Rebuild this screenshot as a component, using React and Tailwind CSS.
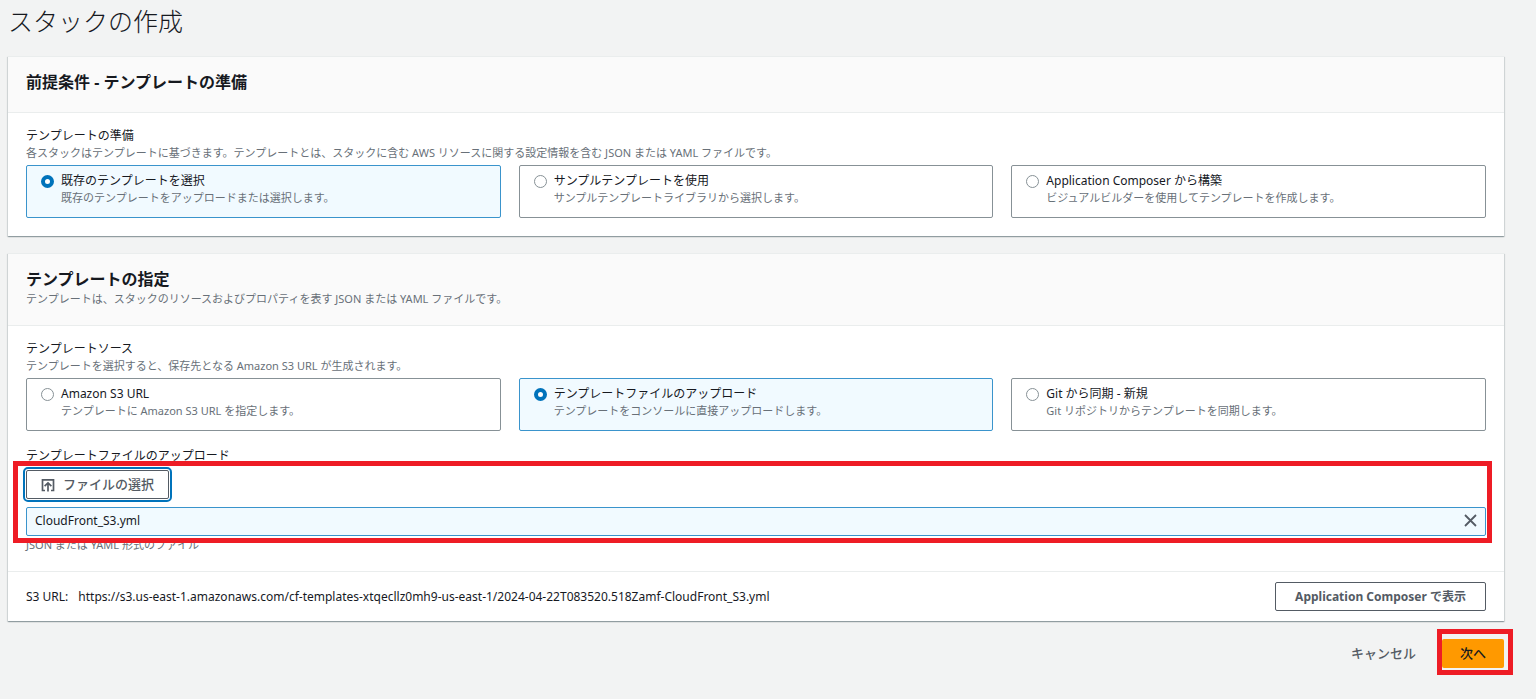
import React, { useState } from "react";

const prepareOptions = [
  {
    value: "existing",
    title: "既存のテンプレートを選択",
    text: "既存のテンプレートをアップロードまたは選択します。",
  },
  {
    value: "sample",
    title: "サンプルテンプレートを使用",
    text: "サンプルテンプレートライブラリから選択します。",
  },
  {
    value: "composer",
    title: "Application Composer から構築",
    text: "ビジュアルビルダーを使用してテンプレートを作成します。",
  },
];

const sourceOptions = [
  {
    value: "s3",
    title: "Amazon S3 URL",
    text: "テンプレートに Amazon S3 URL を指定します。",
  },
  {
    value: "upload",
    title: "テンプレートファイルのアップロード",
    text: "テンプレートをコンソールに直接アップロードします。",
  },
  {
    value: "git",
    title: "Git から同期 - 新規",
    text: "Git リポジトリからテンプレートを同期します。",
  },
];

const UploadIcon = () => (
  <svg
    width="14"
    height="14"
    viewBox="0 0 14 14"
    fill="none"
    stroke="currentColor"
    strokeWidth="1.7"
    aria-hidden="true"
  >
    <path d="M4 12.5H1.5V1.8h11v10.7H10" />
    <path d="M7 13.5V5M3.6 8.2L7 4.9l3.4 3.3" />
  </svg>
);

const CloseIcon = () => (
  <svg
    width="13"
    height="13"
    viewBox="0 0 13 13"
    fill="none"
    stroke="currentColor"
    strokeWidth="1.8"
    aria-hidden="true"
  >
    <path d="M1 1l11 11M12 1L1 12" />
  </svg>
);

const Card = ({ title, description, children }) => (
  <section className="bg-white shadow-[0_1px_1px_0_rgba(0,28,36,0.25),1px_1px_1px_0_rgba(0,28,36,0.1),-1px_1px_1px_0_rgba(0,28,36,0.1)]">
    <header className="border-y border-[#eaeded] bg-[#fafafa] px-[18px] pt-[13px] pb-[18px]">
      <h2 className="text-base leading-6 font-bold text-[#16191f]">{title}</h2>
      {description && (
        <p className="text-[11px] leading-4 text-[#687078]">{description}</p>
      )}
    </header>
    {children}
  </section>
);

const Tiles = ({ name, label, description, options, value, onChange }) => (
  <fieldset>
    <legend className="text-xs leading-[18px]">{label}</legend>
    <p className="text-[11px] leading-4 text-[#687078]">{description}</p>
    <div className="mt-1 grid grid-cols-3 gap-[18px]">
      {options.map((option) => (
        <label
          key={option.value}
          className="flex gap-[7px] rounded-xs border border-[#879196] bg-white px-[14px] pt-[6px] pb-[11px] has-checked:border-[#3a94cc] has-checked:bg-[#f1faff]"
        >
          <input
            type="radio"
            name={name}
            value={option.value}
            checked={value === option.value}
            onChange={() => onChange(option.value)}
            className="mt-[3px] size-[13px] shrink-0 appearance-none rounded-full border border-[#879196] bg-white checked:border-4 checked:border-[#0073bb]"
          />
          <span className="min-w-0">
            <span className="block text-xs leading-[18px]">{option.title}</span>
            <span className="block text-[11px] leading-4 text-[#687078]">
              {option.text}
            </span>
          </span>
        </label>
      ))}
    </div>
  </fieldset>
);

const App = () => {
  const [prepare, setPrepare] = useState("existing");
  const [source, setSource] = useState("upload");
  const [fileName, setFileName] = useState("CloudFront_S3.yml");

  return (
    <div
      lang="ja"
      className="min-h-screen bg-[#f2f3f3] pr-8 pl-2 font-['Noto_Sans','Noto_Sans_CJK_JP',sans-serif] text-[#16191f]"
    >
      <h1 className="pt-[3px] pb-[17px] text-[25px] leading-9 font-light">
        スタックの作成
      </h1>

      <main className="flex flex-col gap-[17px]">
        <Card title="前提条件 - テンプレートの準備">
          <div className="px-[18px] pt-[14px] pb-[18px]">
            <Tiles
              name="prepare"
              label="テンプレートの準備"
              description="各スタックはテンプレートに基づきます。テンプレートとは、スタックに含む AWS リソースに関する設定情報を含む JSON または YAML ファイルです。"
              options={prepareOptions}
              value={prepare}
              onChange={setPrepare}
            />
          </div>
        </Card>

        <Card
          title="テンプレートの指定"
          description="テンプレートは、スタックのリソースおよびプロパティを表す JSON または YAML ファイルです。"
        >
          <div className="px-[18px] pt-[14px] pb-[18px]">
            <Tiles
              name="source"
              label="テンプレートソース"
              description="テンプレートを選択すると、保存先となる Amazon S3 URL が生成されます。"
              options={sourceOptions}
              value={source}
              onChange={setSource}
            />

            <p className="mt-4 text-xs leading-[18px]">
              テンプレートファイルのアップロード
            </p>
            <div className="relative pt-[5px] pb-px">
              <button
                type="button"
                className="flex h-[29px] items-center gap-2 rounded-xs border border-[#545b64] bg-white px-[14px] text-[13px] font-medium text-[#545b64] outline-2 outline-offset-1 outline-[#0073bb]"
              >
                <UploadIcon />
                ファイルの選択
              </button>
              <div className="mt-2 flex h-[29px] items-center justify-between rounded-xs border border-[#3a94cc] bg-[#f1faff] px-2 pb-[2px] text-xs">
                <span>{fileName}</span>
                <button
                  type="button"
                  aria-label="ファイルを削除"
                  onClick={() => setFileName("")}
                  className="text-[#545b64]"
                >
                  <CloseIcon />
                </button>
              </div>
              {/* highlight frame around the file picker */}
              <div className="pointer-events-none absolute -top-1 -right-[6px] -bottom-[6px] -left-[13px] border-5 border-[#ee1c25]" />
            </div>
            <p className="text-[11px] leading-4 text-[#687078]">
              JSON または YAML 形式のファイル
            </p>
          </div>

          <div className="flex items-center justify-between border-t border-[#eaeded] px-[18px] py-[10px] text-xs">
            <p className="flex gap-[10px]">
              <span>S3 URL:</span>
              <span>
                https://s3.us-east-1.amazonaws.com/cf-templates-xtqecllz0mh9-us-east-1/2024-04-22T083520.518Zamf-CloudFront_S3.yml
              </span>
            </p>
            <button
              type="button"
              className="h-[29px] rounded-xs border border-[#545b64] bg-white px-[19px] font-bold text-[#545b64]"
            >
              Application Composer で表示
            </button>
          </div>
        </Card>
      </main>

      <div className="mt-[18px] flex items-center justify-end gap-2 text-[13px]">
        <button
          type="button"
          className="h-[29px] px-[18px] font-medium text-[#545b64]"
        >
          キャンセル
        </button>
        <div className="relative">
          <button
            type="button"
            className="block h-[29px] rounded-xs bg-[#ff9900] px-[18px] font-medium text-[#16191f]"
          >
            次へ
          </button>
          {/* highlight frame around the next button */}
          <div className="pointer-events-none absolute -top-[10px] -right-[9px] -bottom-[7px] -left-[5px] border-5 border-[#ee1c25]" />
        </div>
      </div>
    </div>
  );
};

export default App;
